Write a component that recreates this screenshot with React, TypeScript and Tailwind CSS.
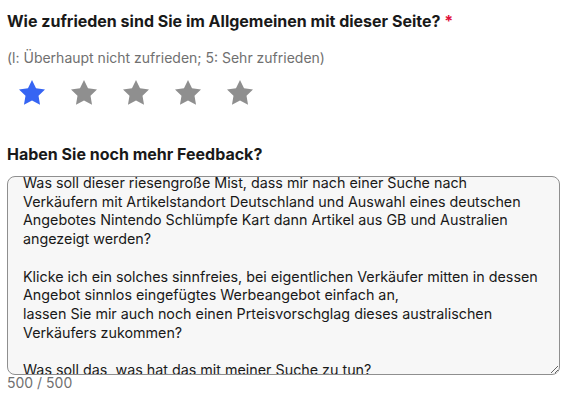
import { useEffect, useRef } from "react";

const FEEDBACK = [
  "Was soll dieser riesengroße Mist, dass mir nach einer Suche nach",
  "Verkäufern mit Artikelstandort Deutschland und Auswahl eines deutschen",
  "Angebotes Nintendo Schlümpfe Kart dann Artikel aus GB und Australien",
  "angezeigt werden?",
  "",
  "Klicke ich ein solches sinnfreies, bei eigentlichen Verkäufer mitten in dessen",
  "Angebot sinnlos eingefügtes Werbeangebot einfach an,",
  "lassen Sie mir auch noch einen Prteisvorschglag dieses australischen",
  "Verkäufers zukommen?",
  "",
  "Was soll das, was hat das mit meiner Suche zu tun?",
].join("\n");

function Star({ active }: { active: boolean }) {
  return (
    <svg
      width="26"
      height="25"
      viewBox="2 2 20 19.1"
      className={active ? "text-[#3665f3]" : "text-[#8f8f8f]"}
      aria-hidden="true"
    >
      <polygon
        fill="currentColor"
        points="12,2 15.09,8.26 22,9.27 17,14.14 18.18,21.02 12,17.77 5.82,21.02 7,14.14 2,9.27 8.91,8.26"
      />
    </svg>
  );
}

export default function App() {
  const areaRef = useRef<HTMLTextAreaElement>(null);

  useEffect(() => {
    if (areaRef.current) areaRef.current.scrollTop = 11;
  }, []);

  return (
    <div
      className="w-[570px] h-[403px] bg-white px-[7px] pt-[9px] text-[#191919] overflow-hidden"
      style={{ fontFamily: "Inter, 'Open Sans', Arial, sans-serif" }}
    >
      <h2 className="text-[16px] leading-[24px] font-bold">
        Wie zufrieden sind Sie im Allgemeinen mit dieser Seite?{" "}
        <span className="text-[#e0103a]">*</span>
      </h2>
      <p className="mt-[15px] text-[14px] leading-[20px] text-[#707070]">
        (l: Überhaupt nicht zufrieden; 5: Sehr zufrieden)
      </p>
      <div className="mt-[12px] ml-[12px] flex gap-[26px]">
        {[1, 2, 3, 4, 5].map((n) => (
          <Star key={n} active={n === 1} />
        ))}
      </div>
      <h2 className="mt-[37px] text-[16px] leading-[24px] font-bold">
        Haben Sie noch mehr Feedback?
      </h2>
      <textarea
        ref={areaRef}
        readOnly
        wrap="off"
        value={FEEDBACK}
        className="mt-[10px] block w-[553px] h-[199px] rounded-[8px] border border-[#8f8f8f] bg-[#f7f7f7] px-[15px] py-[8px] text-[14.3px] leading-[18.7px] text-[#191919] overflow-hidden resize-y outline-none"
        style={{ fontFamily: "Inter, 'Open Sans', Arial, sans-serif" }}
      />
      <div className="mt-[1px] text-[14px] leading-[14px] text-[#707070]">500 / 500</div>
    </div>
  );
}
